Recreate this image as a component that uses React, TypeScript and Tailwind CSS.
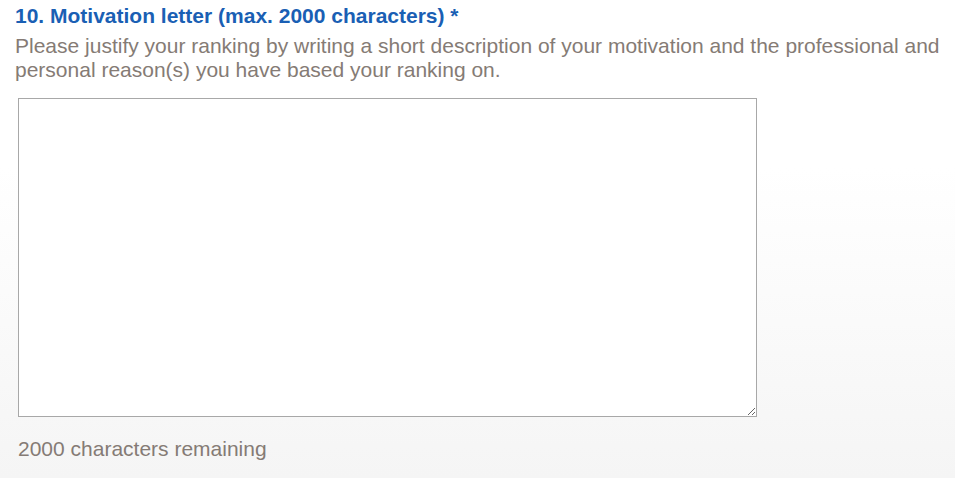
export default function App() {
  return (
    <div
      className="w-[955px] h-[478px] overflow-hidden bg-gradient-to-b from-white from-35% to-[#f5f5f5] pl-[15px] pt-[4px]"
      style={{ fontFamily: '"Liberation Sans", Arial, sans-serif' }}
    >
      <h2 className="text-[21px] leading-[24px] font-bold text-[#1a5fb4]">
        10. Motivation letter (max. 2000 characters) *
      </h2>
      <p className="mt-[6px] text-[21px] leading-[24px] text-[#857b75]">
        Please justify your ranking by writing a short description of your
        motivation and the professional and personal reason(s) you have based
        your ranking on.
      </p>
      <textarea
        className="block mt-[16px] ml-[3px] w-[739px] h-[319px] bg-white border border-[#a8a8a8] outline-none"
        aria-label="Motivation letter"
      />
      <p className="mt-[20px] ml-[3px] text-[21px] leading-[24px] text-[#857b75]">
        2000 characters remaining
      </p>
    </div>
  );
}
